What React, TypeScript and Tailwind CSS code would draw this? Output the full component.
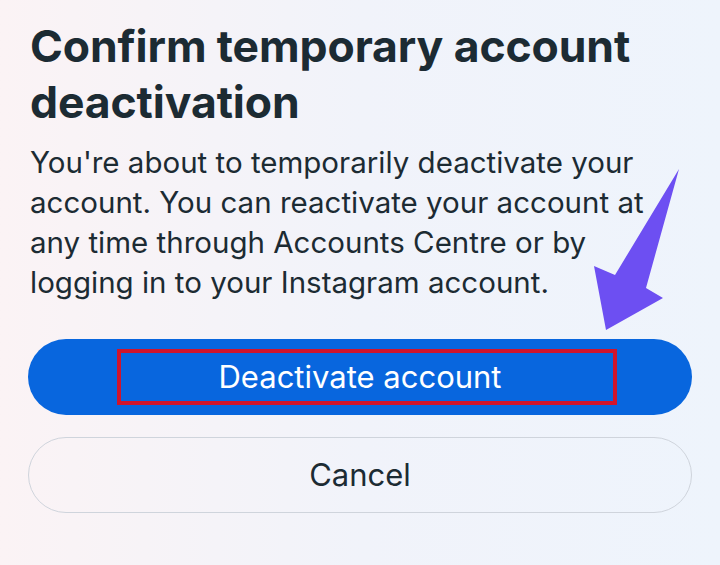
import React from 'react';

const App: React.FC = () => {
    return (
        <div
            className="relative w-[720px] h-[565px] overflow-hidden bg-gradient-to-r from-[#fbf3f5] via-[#f1f3fa] to-[#eef4fc] px-[28px] pt-[18px]"
            style={{ fontFamily: 'Inter, "Noto Sans", sans-serif' }}
        >
            <h1 className="text-[44.5px] leading-[56px] font-bold text-[#1c2b33] tracking-[-0.1px] pl-[2px]">
                Confirm temporary account deactivation
            </h1>
            <p className="mt-[12px] pl-[2px] text-[29.5px] leading-[40px] text-[#1c2b33] pr-[40px]">
                You're about to temporarily deactivate your account. You can reactivate your account at any
                time through Accounts Centre or by logging in to your Instagram account.
            </p>

            <div className="mt-[37px] flex flex-col gap-[22px]">
                <button className="h-[76px] w-full rounded-full bg-[#0866de] flex items-center justify-center">
                    <span className="flex items-center justify-center w-[500px] h-[56px] border-[4px] border-[#d0142c] text-white text-[31px] ml-[14px] pr-[14px]">
                        Deactivate account
                    </span>
                </button>
                <button className="h-[76px] w-full rounded-full border border-[#cfd4dc] flex items-center justify-center text-[31px] text-[#1c2b33]">
                    Cancel
                </button>
            </div>

            <svg
                className="absolute left-0 top-0 pointer-events-none"
                width="720"
                height="565"
                viewBox="0 0 720 565"
            >
                <path d="M679 169 L646 288 L663 298 L606 330 L594 266 L615 275 Z" fill="#6d4ff2" />
            </svg>
        </div>
    );
};

export default App;
